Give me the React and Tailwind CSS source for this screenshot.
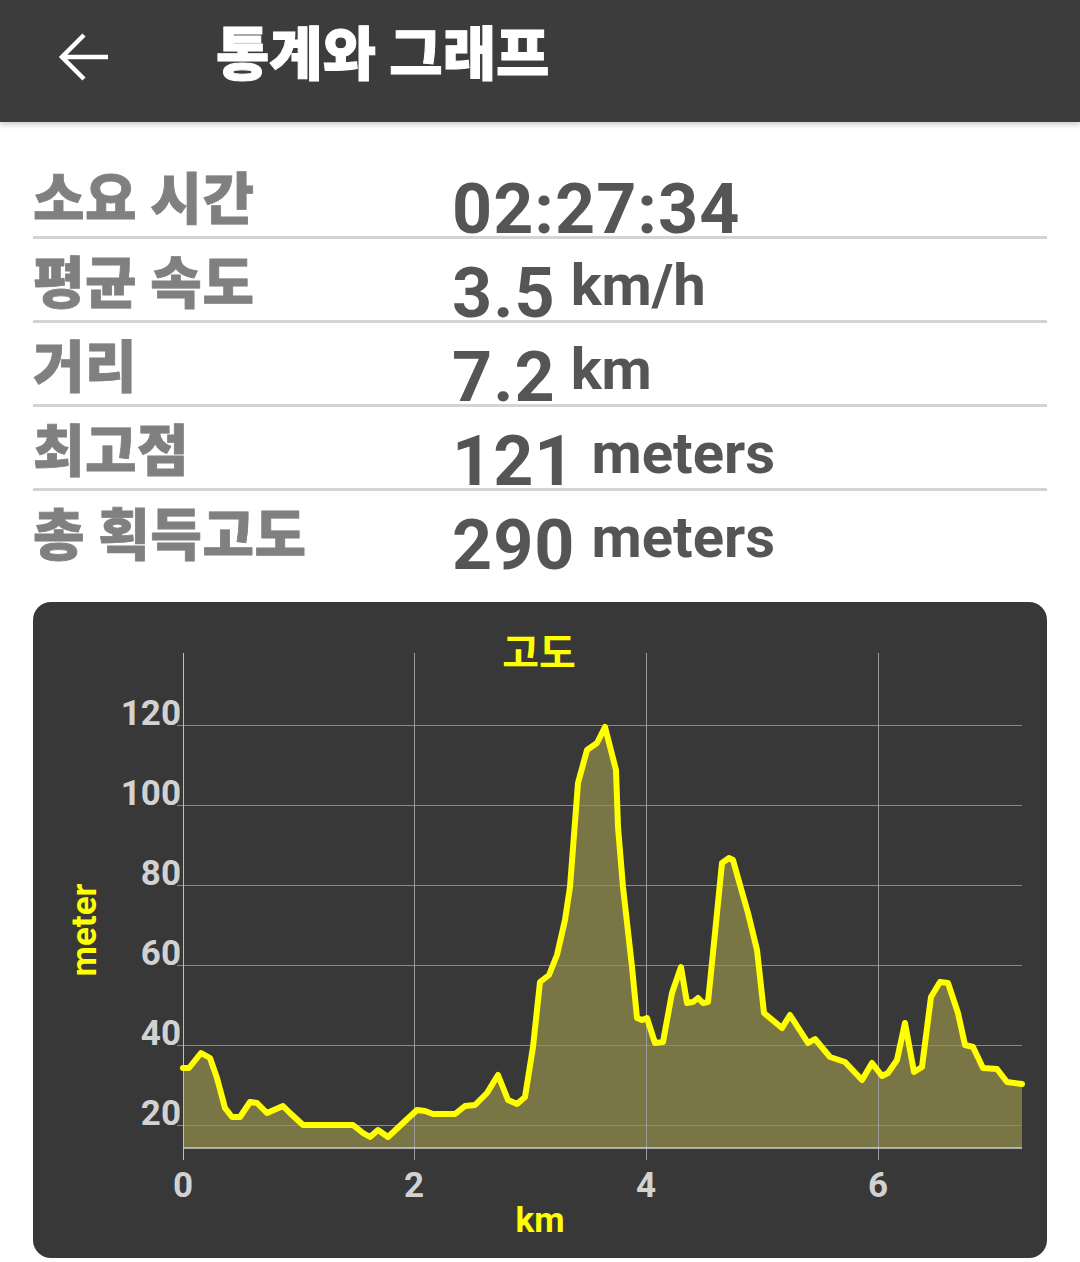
import React from "react";

const pts = [
  [183,1068],[189,1068],[201,1053],[210,1058],[217,1078],[225,1108],[232,1117],[240,1117],
  [250,1102],[257,1103],[267,1113],[283,1106],[290,1113],[303,1125],[353,1125],[363,1133],
  [370,1137],[378,1130],[388,1137],[403,1123],[417,1110],[425,1111],[433,1114],[455,1114],
  [465,1106],[475,1105],[487,1093],[498,1075],[508,1100],[517,1104],[525,1097],[533,1047],
  [540,982],[549,975],[557,955],[565,920],[570,887],[578,783],[587,750],[597,743],[605,727],
  [616,770],[618,827],[623,887],[632,967],[637,1018],[642,1020],[647,1018],[655,1043],
  [663,1042],[672,993],[681,967],[687,1003],[693,1002],[698,998],[703,1003],[708,1002],
  [715,933],[722,863],[729,858],[733,860],[740,885],[748,913],[757,950],[764,1013],
  [782,1028],[790,1015],[808,1043],[815,1039],[830,1057],[845,1062],[862,1080],[872,1063],
  [882,1076],[888,1073],[897,1060],[905,1023],[914,1072],[922,1067],[931,997],[940,982],
  [948,983],[958,1013],[965,1045],[973,1047],[983,1068],[997,1069],[1007,1082],[1022,1084],
];

const line = pts.map((p) => p.join(",")).join(" ");
const area = `183,1148 ${line} 1022,1148`;

const yTicks = [
  [120, 725],
  [100, 805],
  [80, 885],
  [60, 965],
  [40, 1045],
  [20, 1125],
];
const xTicks = [
  [0, 183],
  [2, 414],
  [4, 646],
  [6, 878],
];

const rows = [
  { label: "소요 시간", value: "02:27:34", unit: "" },
  { label: "평균 속도", value: "3.5", unit: "km/h" },
  { label: "거리", value: "7.2", unit: "km" },
  { label: "최고점", value: "121", unit: "meters" },
  { label: "총 획득고도", value: "290", unit: "meters" },
];

const cjk = { fontFamily: '"Noto Sans CJK KR", "Noto Sans", sans-serif' };
const roboto = { fontFamily: 'Roboto, "Noto Sans", sans-serif' };

export default function App() {
  return (
    <div className="w-[1080px] h-[1262px] bg-white overflow-hidden">
      <header className="h-[122px] bg-[#3c3c3c] flex items-center shadow-[0_2px_6px_rgba(0,0,0,0.25)] relative z-10">
        <svg width="72" height="72" viewBox="0 0 72 72" className="ml-[48px] -mt-[8px]">
          <path d="M60 50H14M36 28L14 50l22 22" transform="translate(0,-14)" fill="none" stroke="#fff" strokeWidth="4.5" strokeLinecap="butt" strokeLinejoin="miter" />
        </svg>
        <h1
          className="ml-[96px] -mt-[22px] text-white text-[58px] font-black leading-none [-webkit-text-stroke:1px_#ffffff]"
          style={cjk}
        >
          통계와 그래프
        </h1>
      </header>

      <div className="mx-[33px] mt-[33px]">
        {rows.map((r, i) => (
          <div
            key={i}
            className={`h-[84px] flex items-start ${i < rows.length - 1 ? "border-b-[3px] border-[#d4d4d4]" : ""}`}
          >
            <div
              className="w-[419px] mt-[12px] text-[56px] font-black leading-none tracking-[0.5px] text-[#808080] [-webkit-text-stroke:0.8px_#808080]"
              style={cjk}
            >
              {r.label}
            </div>
            <div className="flex items-start">
              <span
                className="mt-[19px] text-[70px] font-bold leading-none tracking-[1px] text-[#555555]"
                style={roboto}
              >
                {r.value}
              </span>
              {r.unit && (
                <span
                  className={`mt-[17px] ${r.unit === "meters" ? "ml-[16px]" : "ml-[15px]"} text-[58px] font-bold leading-none text-[#555555]`}
                  style={roboto}
                >
                  {r.unit}
                </span>
              )}
            </div>
          </div>
        ))}
      </div>

      <div className="mx-[33px] mt-[27px] h-[656px] rounded-[18px] bg-[#383838] overflow-hidden">
        <svg width="1014" height="656" viewBox="33 602 1014 656" className="block">
          <polygon points={area} fill="#7a7545" />
          {yTicks.map(([v, y]) => (
            <g key={v}>
              <line x1="177" y1={y + 0.5} x2="1022" y2={y + 0.5} stroke="#8a8a8a" strokeWidth="1" />
              <text
                x="181"
                y={y}
                textAnchor="end"
                fill="#d2d2d2"
                fontSize="35"
                fontWeight="700"
                fontFamily="Roboto, sans-serif"
              >
                {v}
              </text>
            </g>
          ))}
          {xTicks.map(([v, x]) => (
            <g key={v}>
              <line x1={x + 0.5} y1="653" x2={x + 0.5} y2="1160" stroke={v === 0 ? "#bdbdbd" : "#9a9a9a"} strokeWidth="1" />
              <text
                x={x}
                y="1197"
                textAnchor="middle"
                fill="#d2d2d2"
                fontSize="35"
                fontWeight="700"
                fontFamily="Roboto, sans-serif"
              >
                {v}
              </text>
            </g>
          ))}
          <line x1="183" y1="1148" x2="1022" y2="1148" stroke="#d0d0d0" strokeWidth="1.5" />
          <polyline points={line} fill="none" stroke="#ffff00" strokeWidth="6" strokeLinejoin="round" strokeLinecap="round" />
          <text x="539" y="667" textAnchor="middle" fill="#ffff00" fontSize="40" fontWeight="700" fontFamily='"Noto Sans CJK KR", sans-serif'>
            고도
          </text>
          <text x="540" y="1232" textAnchor="middle" fill="#ffff00" fontSize="35" fontWeight="700" fontFamily="Roboto, sans-serif">
            km
          </text>
          <text
            transform="translate(96,930) rotate(-90)"
            textAnchor="middle"
            fill="#ffff00"
            fontSize="35"
            fontWeight="700"
            fontFamily="Roboto, sans-serif"
          >
            meter
          </text>
        </svg>
      </div>
    </div>
  );
}
